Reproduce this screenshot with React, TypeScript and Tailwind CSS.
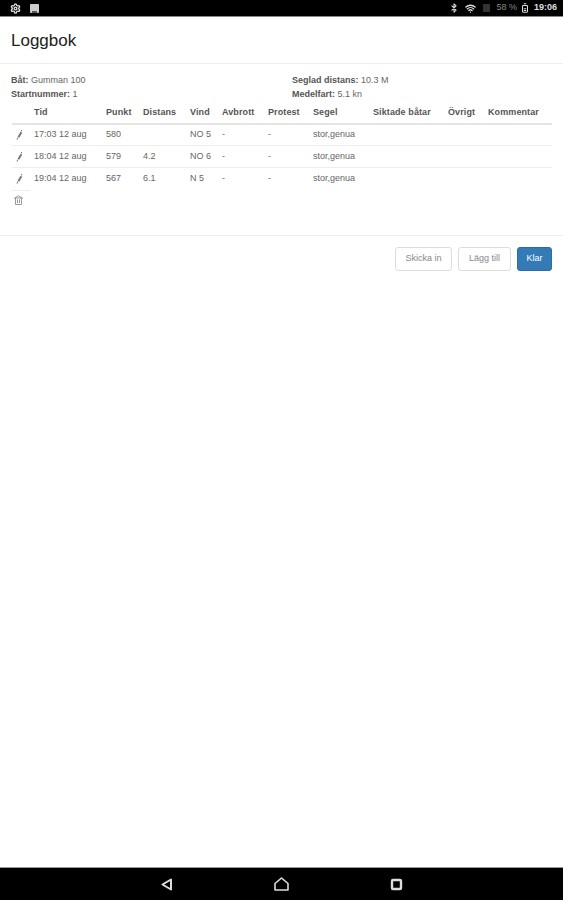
import { BatteryMedium, Bluetooth, Settings, Wifi } from "lucide-react";

const columns = ["Tid", "Punkt", "Distans", "Vind", "Avbrott", "Protest", "Segel", "Siktade båtar", "Övrigt", "Kommentar"];

const rows = [
  { tid: "17:03 12 aug", punkt: "580", distans: "", vind: "NO 5" },
  { tid: "18:04 12 aug", punkt: "579", distans: "4.2", vind: "NO 6" },
  { tid: "19:04 12 aug", punkt: "567", distans: "6.1", vind: "N 5" },
];

const StatusBar = () => (
  <div className="flex h-[17px] items-center justify-between border-b border-[#888] bg-black pl-[10px] pr-[6px] text-[9px] font-medium text-[#ddd]">
    <div className="flex items-center gap-[9px]">
      <Settings className="h-[11px] w-[11px]" strokeWidth={3} />
      <div className="flex h-[9px] w-[9px] items-end justify-center rounded-[1px] bg-[#ccc]">
        <div className="h-[2px] w-[5px] bg-[#555]" />
      </div>
    </div>
    <div className="flex items-center gap-[3px]">
      <Bluetooth className="h-[10px] w-[10px]" strokeWidth={2.5} />
      <Wifi className="ml-[3px] h-[11px] w-[11px]" strokeWidth={3} />
      <div className="ml-[4px] h-[8px] w-[7px] bg-[#333]" />
      <span className="ml-[3px] text-[#888]">58 %</span>
      <BatteryMedium className="h-[10px] w-[10px] -rotate-90" strokeWidth={2.5} />
      <span className="ml-[1px] font-bold">19:06</span>
    </div>
  </div>
);

const NavBar = () => (
  <div className="flex h-[33px] items-center justify-center gap-[101px] border-t border-[#999] bg-black">
    <svg width="13" height="13" viewBox="0 0 13 13" fill="none" stroke="#ddd" strokeWidth="2" strokeLinejoin="round">
      <path d="M11 1.5 V11.5 L2.5 6.5 Z" />
    </svg>
    <svg width="15" height="14" viewBox="0 0 15 14" fill="none" stroke="#ddd" strokeWidth="1.6" strokeLinejoin="round">
      <path d="M1 13 V6.5 L7.5 1 L14 6.5 V13 Z" />
    </svg>
    <svg width="13" height="13" viewBox="0 0 13 13" fill="none" stroke="#ddd" strokeWidth="2.4">
      <rect x="2" y="2" width="9" height="9" rx="1" />
    </svg>
  </div>
);

// steep little pencil, same as the glyph in the table rows
const PencilGlyph = () => (
  <svg width="7" height="10" viewBox="0 0 7 10" className="block" fill="none" stroke="#777">
    <path d="M5.4 2.2 L2.4 7.2" strokeWidth="2" />
    <path d="M5.6 0 L5.4 1.4" strokeWidth="1" />
    <path d="M1.8 7.6 L1 9.6" strokeWidth="1" />
  </svg>
);

const TrashGlyph = () => (
  <svg width="9" height="10" viewBox="0 0 9 10" className="block" fill="none" stroke="#999" strokeWidth="1">
    <path d="M0.5 3 L4.5 0.8 L8.5 3 Z" />
    <path d="M1.5 3 V9.5 H7.5 V3" />
    <path d="M3.5 4.5 V8 M5.5 4.5 V8" />
  </svg>
);

export default function App() {
  return (
    <div className="flex h-[900px] flex-col bg-white font-['Liberation_Sans',sans-serif] text-[9px] text-[#666]">
      <StatusBar />

      <header className="flex h-[47px] items-center border-b border-[#eee] px-[11px] pt-[1px]">
        <h1 className="text-[17px] leading-none text-[#222]">Loggbok</h1>
      </header>

      <main className="h-[172px] border-b border-[#eee] px-[11px] pt-[11px]">
        <div className="grid grid-cols-[281px_1fr] gap-y-[4px] leading-[10px]">
          <div><b className="text-[#555]">Båt:</b> Gumman 100</div>
          <div><b className="text-[#555]">Seglad distans:</b> 10.3 M</div>
          <div><b className="text-[#555]">Startnummer:</b> 1</div>
          <div><b className="text-[#555]">Medelfart:</b> 5.1 kn</div>
        </div>

        <table className="ml-[1px] mt-[7px] w-[540px] table-fixed border-collapse">
          <colgroup>
            <col className="w-[22px]" />
            <col className="w-[72px]" />
            <col className="w-[37px]" />
            <col className="w-[47px]" />
            <col className="w-[32px]" />
            <col className="w-[46px]" />
            <col className="w-[45px]" />
            <col className="w-[60px]" />
            <col className="w-[75px]" />
            <col className="w-[40px]" />
            <col className="w-[64px]" />
          </colgroup>
          <thead>
            <tr className="h-[15px] border-b-2 border-[#e6e6e6]">
              <th />
              {columns.map((c) => (
                <th key={c} className="whitespace-nowrap pb-[3px] text-left align-top font-bold tracking-[0.1px] text-[#555]">
                  {c}
                </th>
              ))}
            </tr>
          </thead>
          <tbody>
            {rows.map((r, i) => (
              <tr key={r.tid} className={i < rows.length - 1 ? "h-[22px] border-b border-[#eee]" : "h-[22px]"}>
                <td className="pl-[4px]">
                  <PencilGlyph />
                </td>
                <td>{r.tid}</td>
                <td>{r.punkt}</td>
                <td>{r.distans}</td>
                <td>{r.vind}</td>
                <td>-</td>
                <td>-</td>
                <td>stor,genua</td>
                <td />
                <td />
                <td />
              </tr>
            ))}
            <tr className="h-[19px]">
              <td className="align-top">
                <div className="h-[19px] w-[18px] border-t border-[#eee] pl-[2px] pt-[4px]">
                  <TrashGlyph />
                </div>
              </td>
            </tr>
          </tbody>
        </table>
      </main>

      <footer className="flex justify-end gap-[6px] px-[11px] pt-[11px]">
        <button className="h-[24px] w-[57px] rounded-[3px] border border-[#ddd] text-[#888]">Skicka in</button>
        <button className="h-[24px] w-[53px] rounded-[3px] border border-[#ddd] text-[#888]">Lägg till</button>
        <button className="h-[24px] w-[35px] rounded-[3px] border border-[#2e6da4] bg-[#337ab7] text-white">Klar</button>
      </footer>

      <div className="flex-1" />
      <NavBar />
    </div>
  );
}
